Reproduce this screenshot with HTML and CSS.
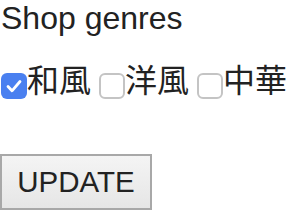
FILE: index.html
```html
<!DOCTYPE html>
<html lang="ja">
<head>
<meta charset="utf-8">
<link rel="stylesheet" href="styles.css">
</head>
<body>
<div class="page">
  <p class="title">Shop genres</p>
  <div class="genres">
    <label class="genre"><span class="box checked"><svg viewBox="0 0 26 26" width="26" height="26"><path d="M7 13.5 L11 17.8 L19 8.5" fill="none" stroke="#fff" stroke-width="2.8" stroke-linecap="round" stroke-linejoin="round"/></svg></span>和風</label>
    <label class="genre"><span class="box"></span>洋風</label>
    <label class="genre"><span class="box"></span>中華</label>
  </div>
  <button class="update" type="button">UPDATE</button>
</div>
</body>
</html>
```

FILE: styles.css
```css
html, body {
  margin: 0;
  padding: 0;
  background: #fff;
}
.page {
  font-family: "Liberation Sans", Arial, "Noto Sans CJK JP", sans-serif;
  color: #222;
  display: flex;
  flex-direction: column;
  align-items: flex-start;
  padding-left: 1px;
}
.title {
  margin: 0;
  font-size: 32px;
  line-height: 37px;
}
.genres {
  margin-top: 18px;
  display: flex;
  gap: 8px;
  font-family: "Noto Sans CJK JP", sans-serif;
  font-size: 32px;
  line-height: 46px;
}
.genre {
  display: flex;
  align-items: flex-start;
}
.box {
  flex: none;
  width: 26px;
  height: 26px;
  box-sizing: border-box;
  border: 2px solid #c4c4c4;
  border-radius: 6px;
  background: #fff;
  margin-right: 0;
  margin-top: 18px;
  display: block;
}
.box svg {
  display: block;
}
.box.checked {
  border: none;
  background: #4a80f0;
}
.update {
  margin-top: 53px;
  margin-left: -1px;
  width: 152px;
  height: 56px;
  box-sizing: border-box;
  border: 2px solid #a8a8a8;
  background: linear-gradient(#f4f4f4, #e6e6e6);
  font-family: "Liberation Sans", Arial, sans-serif;
  font-size: 29.5px;
  color: #222;
  padding: 0;
  border-radius: 0;
}
```
